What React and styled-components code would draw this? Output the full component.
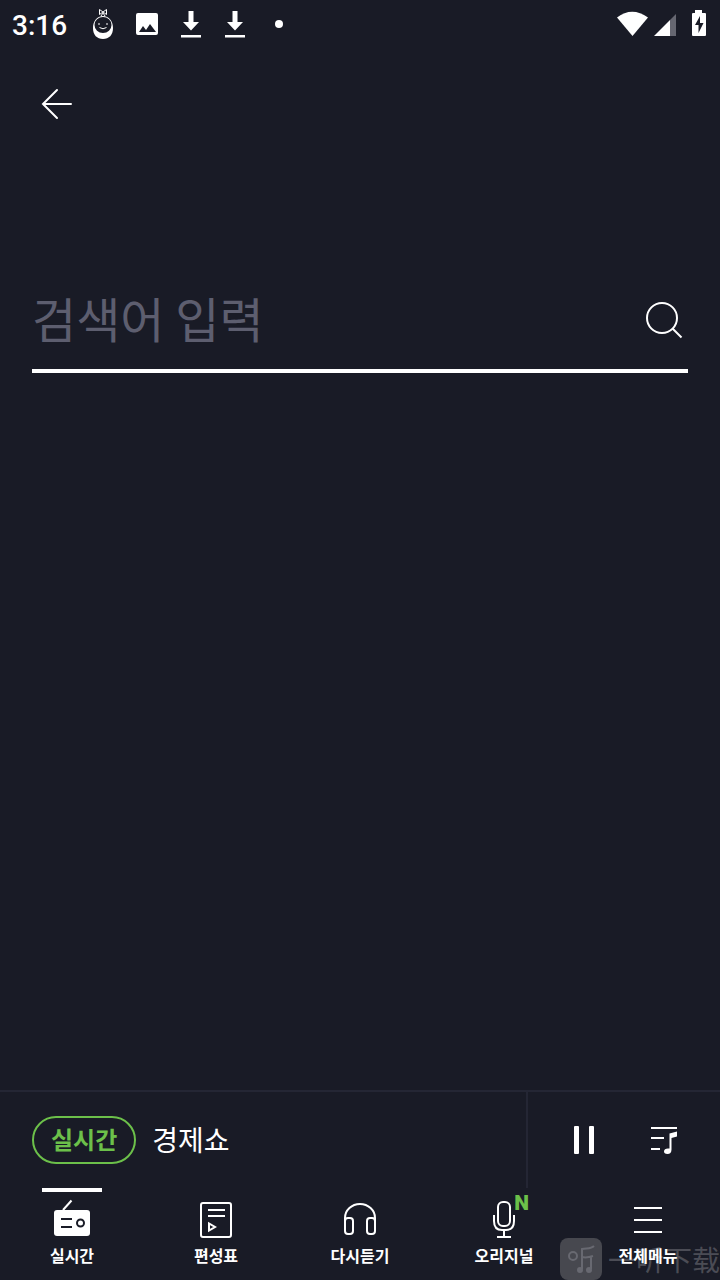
import styled, { createGlobalStyle } from "styled-components";

const menus = [
  { name: "실시간", icon: RadioIcon, active: true },
  { name: "편성표", icon: ScheduleIcon },
  { name: "다시듣기", icon: HeadphoneIcon },
  { name: "오리지널", icon: MicIcon, isNew: true },
  { name: "전체메뉴", icon: MenuIcon },
];

function App() {
  return (
    <LApp>
      <GlobalStyle />
      <LStatusBar>
        <CTime>3:16</CTime>
        <CNotice><FaceIcon /></CNotice>
        <CNotice><PictureIcon /></CNotice>
        <CNotice><DownloadIcon /></CNotice>
        <CNotice><DownloadIcon /></CNotice>
        <CNotice><CDot /></CNotice>
        <CSystem><SystemIcons /></CSystem>
      </LStatusBar>

      <LHeader>
        <CIconButton type="button" aria-label="뒤로">
          <svg width="48" height="48" fill="none" stroke="#fff" strokeWidth="2">
            <path d="M39 24H11M25 10L11 24l14 14" strokeLinecap="round" />
          </svg>
        </CIconButton>
      </LHeader>

      <LMain>
        <CSearch onSubmit={(e) => e.preventDefault()}>
          <CSearchInput type="text" placeholder="검색어 입력" aria-label="검색어 입력" />
          <CIconButton type="submit" aria-label="검색">
            <svg width="48" height="48" fill="none" stroke="#fff" strokeWidth="2">
              <circle cx="22" cy="22" r="15" />
              <path d="M32.500 32.500l9 9" />
            </svg>
          </CIconButton>
        </CSearch>
      </LMain>

      <LPlayer>
        <CNowPlaying>
          <CLive>실시간</CLive>
          <CProgram>경제쇼</CProgram>
        </CNowPlaying>
        <CControls>
          <CIconButton type="button" aria-label="일시정지">
            <svg width="48" height="48" fill="#fff">
              <rect x="14" y="10" width="5" height="28" rx="1" />
              <rect x="29" y="10" width="5" height="28" rx="1" />
            </svg>
          </CIconButton>
          <CIconButton type="button" aria-label="재생목록">
            <svg width="48" height="48" fill="#fff">
              <path d="M11 11h26v2H11zM11 21h13v2H11zM11 32h9v2h-9z" />
              <path d="M29.500 17.500L37 15.500v5l-5.500 1.500v11.500c0 3-1.500 4.500-4 4.500s-3.500-1-3.500-2.500c0-2 1.500-3 4-3h1.500z" />
            </svg>
          </CIconButton>
        </CControls>
      </LPlayer>

      <LNav>
        {menus.map(({ name, icon: Icon, active, isNew }) => (
          <CNavItem key={name} href="#" $active={active}>
            <CNavIcon>
              <Icon />
              {isNew && <CNew>N</CNew>}
            </CNavIcon>
            <CNavText>{name}</CNavText>
          </CNavItem>
        ))}
      </LNav>

      <CWatermark aria-hidden="true">
        <CWatermarkLogo>
          <svg width="42" height="42" fill="none" stroke="#686971" strokeWidth="2">
            <circle cx="13" cy="18" r="4" />
            <path d="M34 8c-3 3-7 2-12 3v20M22 19c4 1 8 0 11-1M31 19v12" />
            <circle cx="20" cy="32" r="2" fill="#686971" />
            <circle cx="29" cy="32" r="2" fill="#686971" />
          </svg>
        </CWatermarkLogo>
        一听下载
      </CWatermark>
    </LApp>
  );
}

export default App;

function FaceIcon() {
  return (
    <svg width="24" height="32" fill="none" stroke="#fff">
      <path d="M8.500 1.500l7 5v-5l-7 5zM10 8l2-3 2 3" strokeWidth="1" />
      <path
        d="M12 8C6 8 2 13 2 20c0 7 4 11 10 11s10-4 10-11c0-7-4-12-10-12zM12 9a8.500 8 0 1 1 0 16a8.500 8 0 1 1 0-16z"
        fill="#fff"
        fillRule="evenodd"
        stroke="none"
      />
      <path d="M8.500 19.500q3.500 2.500 7 0M8 15v2M16 15v2" />
    </svg>
  );
}

function PictureIcon() {
  return (
    <svg width="24" height="24">
      <path
        d="M3 1h18a2 2 0 0 1 2 2v18a2 2 0 0 1-2 2H3a2 2 0 0 1-2-2V3a2 2 0 0 1 2-2zM4 20h17l-6-8-4 6-3-4z"
        fill="#fff"
        fillRule="evenodd"
      />
    </svg>
  );
}

function DownloadIcon() {
  return (
    <svg width="20" height="28" fill="#fff">
      <path d="M7.500 1h5v11h5.500L10 20.500 2 12h5.500zM0 25h20v2.500H0z" />
    </svg>
  );
}

function SystemIcons() {
  return (
    <svg width="92" height="32" fill="#fff">
      <path d="M1 9.500Q16 -2 32 9.500L16.500 28z" />
      <path d="M38 28L54 12v16z" />
      <path d="M54 12l6-6v22h-6z" fill="#666771" />
      <path
        d="M79 2h7v3h3a1 1 0 0 1 1 1v21a1 1 0 0 1-1 1H77a1 1 0 0 1-1-1V6a1 1 0 0 1 1-1h2zM84 8l-5 9h3.500v8l5-10H84z"
        fillRule="evenodd"
      />
    </svg>
  );
}

function RadioIcon() {
  return (
    <svg width="40" height="40" fill="none" strokeWidth="2">
      <rect x="2" y="12" width="36" height="26" rx="3" fill="#fff" />
      <path d="M11 12l8.500-9.500" stroke="#fff" />
      <path d="M9 21h11M9 29h11" stroke="#191b26" />
      <circle cx="28.500" cy="25" r="3.500" stroke="#191b26" />
    </svg>
  );
}

function ScheduleIcon() {
  return (
    <svg width="40" height="40" fill="none" stroke="#fff" strokeWidth="2">
      <rect x="5" y="5" width="30" height="34" rx="2" />
      <path d="M12 12h17M12 18h17M13 25.500v7l6-3.500z" />
    </svg>
  );
}

function HeadphoneIcon() {
  return (
    <svg width="40" height="40" fill="none" stroke="#fff" strokeWidth="2">
      <path d="M5 24v-4a15 14 0 0 1 30 0v4" />
      <rect x="5" y="20" width="8" height="16" rx="3" />
      <rect x="27" y="20" width="8" height="16" rx="3" />
    </svg>
  );
}

function MicIcon() {
  return (
    <svg width="40" height="40" fill="none" stroke="#fff" strokeWidth="2">
      <rect x="14" y="4" width="12" height="24" rx="5" />
      <path d="M10 17v6q0 9 8 9h4q8 0 8-9v-6M20 32v7M13 39h14" />
    </svg>
  );
}

function MenuIcon() {
  return (
    <svg width="40" height="40" stroke="#fff" strokeWidth="2">
      <path d="M6 10h28M6 22h28M6 34h28" />
    </svg>
  );
}

const GlobalStyle = createGlobalStyle`
  * {
    box-sizing: border-box;
  }
  body {
    margin: 0;
    background: #191b26;
    color: #fff;
    font-family: "Noto Sans CJK KR", sans-serif;
  }
  svg {
    display: block;
  }
`;

const LApp = styled.div`
  position: relative;
  display: flex;
  flex-direction: column;
  min-height: 100vh;
`;
const LStatusBar = styled.div`
  display: flex;
  align-items: center;
  height: 48px;
  padding: 0 12px;
`;
const CTime = styled.time`
  width: 69px;
  font: 500 28px/44px Roboto, sans-serif;
  padding-top: 4px;
`;
const CNotice = styled.span`
  display: flex;
  justify-content: center;
  width: 44px;
`;
const CDot = styled.i`
  width: 8px;
  height: 8px;
  border-radius: 50%;
  background: #fff;
`;
const CSystem = styled.span`
  margin-left: auto;
`;
const LHeader = styled.header`
  display: flex;
  align-items: center;
  height: 112px;
  padding: 0 32px;
`;
const CIconButton = styled.button`
  flex: none;
  width: 48px;
  height: 48px;
  padding: 0;
  border: 0;
  background: none;
  cursor: pointer;
`;
const LMain = styled.main`
  flex: 1;
  padding: 112px 32px 0;
`;
const CSearch = styled.form`
  display: flex;
  align-items: center;
  height: 101px;
  padding-bottom: 2px;
  border-bottom: 4px solid #fff;
`;
const CSearchInput = styled.input`
  flex: 1;
  min-width: 0;
  height: 80px;
  padding: 0 0 5px;
  border: 0;
  outline: 0;
  background: none;
  color: #fff;
  font: 400 48px "Noto Sans CJK KR", sans-serif;
  &::placeholder {
    color: #5d5e6f;
    opacity: 1;
  }
`;
const LPlayer = styled.section`
  display: flex;
  height: 98px;
  border-top: 2px solid #242634;
`;
const CNowPlaying = styled.div`
  display: flex;
  flex: 1;
  align-items: center;
  gap: 16px;
  padding-left: 32px;
`;
const CLive = styled.span`
  height: 48px;
  padding: 0 17px;
  border: 2px solid #6cc04a;
  border-radius: 24px;
  color: #6cc04a;
  font-size: 24px;
  font-weight: 700;
  line-height: 42px;
`;
const CProgram = styled.span`
  font-size: 28px;
  line-height: 44px;
  padding-bottom: 2px;
`;
const CControls = styled.div`
  display: flex;
  align-items: center;
  gap: 32px;
  padding: 0 32px;
  border-left: 2px solid #242634;
`;
const LNav = styled.nav`
  display: grid;
  grid-template-columns: repeat(5, 1fr);
  height: 92px;
`;
const CNavItem = styled.a`
  display: flex;
  flex-direction: column;
  align-items: center;
  color: #fff;
  text-decoration: none;
  &::before {
    content: "";
    width: 60px;
    height: 4px;
    margin-bottom: 6px;
    background: ${({ $active }) => ($active ? "#fff" : "transparent")};
  }
`;
const CNavIcon = styled.span`
  position: relative;
`;
const CNew = styled.em`
  position: absolute;
  top: -5px;
  right: -5px;
  color: #6cc04a;
  font: 900 21px/20px Roboto, sans-serif;
`;
const CNavText = styled.span`
  margin-top: 5px;
  font-size: 16px;
  font-weight: 700;
  line-height: 24px;
`;
const CWatermark = styled.div`
  position: absolute;
  right: 0;
  bottom: 0;
  display: flex;
  align-items: center;
  gap: 6px;
  height: 42px;
  color: rgba(255, 255, 255, 0.22);
  font: 400 28px/42px "Noto Sans CJK SC", sans-serif;
  pointer-events: none;
`;
const CWatermarkLogo = styled.span`
  border-radius: 8px;
  background: #47484f;
`;
